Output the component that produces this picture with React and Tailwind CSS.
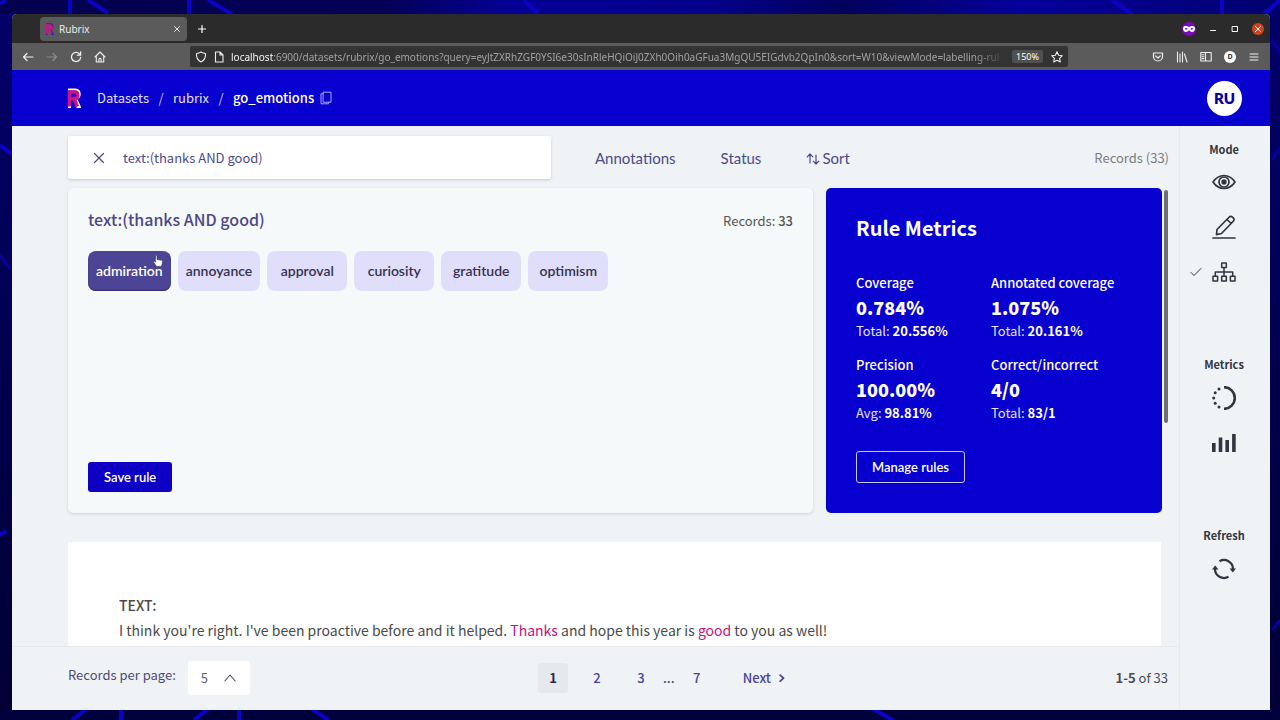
import React from "react";

const SANS = "font-['Noto_Sans_CJK_JP','Noto_Sans',sans-serif]";
const GEO = "font-[Lato,'Liberation_Sans',sans-serif]";

function Wallpaper() {
  return (
    <svg
      className="absolute inset-0 h-full w-full"
      viewBox="0 0 1280 720"
      preserveAspectRatio="none"
      fill="none"
      aria-hidden="true"
    >
      <defs>
        <linearGradient id="sky" x1="0" x2="1">
          <stop offset="0" stopColor="#03004e" />
          <stop offset="0.3" stopColor="#040056" />
          <stop offset="0.4" stopColor="#050095" />
          <stop offset="0.55" stopColor="#04008c" />
          <stop offset="0.66" stopColor="#03005c" />
          <stop offset="0.8" stopColor="#05009c" />
          <stop offset="1" stopColor="#03006e" />
        </linearGradient>
        <linearGradient id="edge" x1="0" x2="0" y1="0" y2="1">
          <stop offset="0" stopColor="#04006a" />
          <stop offset="0.35" stopColor="#030058" />
          <stop offset="0.6" stopColor="#020048" />
          <stop offset="1" stopColor="#020034" />
        </linearGradient>
      </defs>
      <rect width="1280" height="720" fill="url(#edge)" />
      <rect width="1280" height="14" fill="url(#sky)" />
      <rect y="709" width="1280" height="11" fill="#02003c" />
      <g stroke="#0b02c6" strokeWidth="4">
        <path d="M0 4 6 0M70 0v14M88 0l20 13M189 0v14M208 0l24 14M524 0l14 13M1112 0l20 14M1222 0v14M1280 0l-16 14" />
        <path d="M0 145l12 9M0 535l6-4M72 720l14-11M121 709v11M194 720l14-11M239 709v11M312 709l16 11M873 709l20 11" />
      </g>
      <g stroke="#0700a0" strokeWidth="3">
        <path d="M1272 40l8 12M1272 160l8-12M1272 630l8-10M0 255l10 14" />
      </g>
    </svg>
  );
}

function Stroke({ className, box = "0 0 16 16", width = 1.4, children }) {
  return (
    <svg
      className={className}
      viewBox={box}
      fill="none"
      stroke="currentColor"
      strokeWidth={width}
      strokeLinecap="round"
      strokeLinejoin="round"
      aria-hidden="true"
    >
      {children}
    </svg>
  );
}

function RubrixMark({ className, back }) {
  return (
    <svg className={className} viewBox="0 0 14 20" fill="none" aria-hidden="true">
      <path d="M1 1.500h7.500c3 0 4.300 1.800 4.300 4.500 0 2.300-1.300 4-3.500 4.600L13 19h-3.500M1 19h3" stroke={back} strokeWidth="1.800" />
      <path d="M2.500 18.500V4h4.700c2.200 0 3.600 1 3.600 3.200s-1.400 3.300-3.600 3.300H3.500M7 10.500l3.300 8" stroke="#cf1187" strokeWidth="3.600" />
    </svg>
  );
}

function TabStrip() {
  return (
    <div className="flex h-[29px] shrink-0 items-center bg-[#2b2b2b] pl-7 pr-1.5 font-['Noto_Sans','Open_Sans',sans-serif] text-white">
      <div className="flex h-6 w-[147px] items-center rounded-sm bg-[#5b5b5b] pl-[5px] pr-1.5">
        <RubrixMark className="h-3 w-[9px]" back="#3a16b8" />
        <span className="ml-[5px] flex-1 text-[10px] leading-4 text-[#ededed]">Rubrix</span>
        <button aria-label="Close tab" className="text-[#e0e0e0]">
          <Stroke className="size-2" box="0 0 8 8" width={1}>
            <path d="M1.500 1.500l5 5M6.500 1.500l-5 5" />
          </Stroke>
        </button>
      </div>
      <button aria-label="New tab" className="ml-2.5">
        <Stroke className="size-2.5" box="0 0 10 10" width={1.200}>
          <path d="M5 1.500v7M1.500 5h7" />
        </Stroke>
      </button>
      <div className="ml-auto flex items-center">
        <svg className="size-3.5" viewBox="0 0 14 14" aria-hidden="true">
          <circle cx="7" cy="7" r="7" fill="#7a09bf" />
          <path
            d="M1 6.500C1 4.500 2.500 4 4 4c1.500 0 2.200.8 3 .8S8.500 4 10 4c1.500 0 3 .5 3 2.500S11.800 10 10 10C8.500 10 7.800 8.500 7 8.500S5.500 10 4 10C2.200 10 1 8.500 1 6.500Z"
            fill="#fff"
          />
          <path d="M2.800 6.800c.6-1.100 2.100-1.100 2.800.2-.7 1.100-2.200 1.100-2.800-.2ZM11.200 6.800c-.6-1.100-2.100-1.100-2.800.2.7 1.100 2.200 1.100 2.800-.2Z" fill="#7a09bf" />
        </svg>
        <button aria-label="Minimize" className="ml-3">
          <Stroke className="size-2.5" box="0 0 10 10" width={1}>
            <path d="M2.500 6.500h5" />
          </Stroke>
        </button>
        <button aria-label="Maximize" className="ml-3">
          <Stroke className="size-2.5" box="0 0 10 10" width={1}>
            <rect x="2.500" y="2.500" width="5" height="5" />
          </Stroke>
        </button>
        <button aria-label="Close window" className="ml-3 rounded-full bg-[#d0431c] p-px">
          <Stroke className="size-2.5" box="0 0 10 10" width={1}>
            <path d="M2.500 2.500l5 5M7.500 2.500l-5 5" />
          </Stroke>
        </button>
      </div>
    </div>
  );
}

function Toolbar() {
  return (
    <div className="flex h-[27px] shrink-0 items-center bg-[#5b5b5b] px-2.5 font-['Noto_Sans','Open_Sans',sans-serif] text-[#efefef]">
      <div className="flex w-[168px] shrink-0 items-center gap-3">
        <button aria-label="Back">
          <Stroke className="size-3" box="0 0 12 12" width={1.200}>
            <path d="M11 6H1.500M5 2.500 1.500 6 5 9.500" />
          </Stroke>
        </button>
        <button aria-label="Forward" className="text-[#8c8c8c]">
          <Stroke className="size-3" box="0 0 12 12" width={1.200}>
            <path d="M1 6h9.500M7 2.500 10.500 6 7 9.500" />
          </Stroke>
        </button>
        <button aria-label="Reload">
          <Stroke className="size-3" box="0 0 12 12" width={1.300}>
            <path d="M10.600 6.500A4.600 4.600 0 1 1 9.500 2.900M10.600 1v3.200H7.400" />
          </Stroke>
        </button>
        <button aria-label="Home">
          <Stroke className="size-3" box="0 0 12 12" width={1.100}>
            <path d="M1 6l5-5 5 5M2.300 5v6h7.400V5M4.900 11V8.300q0-1 1.100-1t1.100 1V11" />
          </Stroke>
        </button>
      </div>
      <div className="flex h-[21px] w-[878px] min-w-0 items-center rounded-xs bg-[#333333] px-1">
        <Stroke className="ml-px size-3 shrink-0" box="0 0 12 12" width={1.100}>
          <path d="M6 1q2 1.300 4.500 1.500Q11 8.500 6 11 1 8.500 1.500 2.500 4 2.300 6 1Z" />
        </Stroke>
        <Stroke className="ml-1.5 size-3 shrink-0" box="0 0 12 12" width={1.100}>
          <path d="M2.500 1h4.500l3 3v7h-7.500zM7 1v3h3" />
        </Stroke>
        <p className="ml-1.5 min-w-0 flex-1 overflow-hidden whitespace-nowrap text-[10px] leading-4 text-[#a2a2a2] [mask-image:linear-gradient(to_right,black_96%,transparent)]">
          <span className="text-[#f5f5f5]">localhost</span>
          :6900/datasets/rubrix/go_emotions?query=eyJtZXRhZGF0YSI6e30sInRleHQiOiJ0ZXh0Oih0aGFua3MgQU5EIGdvb2QpIn0&amp;sort=W10&amp;viewMode=labelling-rul
        </p>
        <span className="ml-1.5 rounded-xs bg-[#505050] px-1 text-[9px] leading-[13px] text-white">150%</span>
        <button aria-label="Bookmark" className="ml-2 mr-px">
          <Stroke className="size-3" box="0 0 12 12" width={1.100}>
            <path d="M6 .8l1.600 3.400 3.700.5-2.700 2.600.7 3.700L6 9.200 2.700 11l.7-3.700L.7 4.700l3.700-.5z" />
          </Stroke>
        </button>
      </div>
      <div className="ml-auto flex items-center gap-3">
        <button aria-label="Pocket">
          <Stroke className="size-3" box="0 0 12 12" width={1.200}>
            <path d="M1.500 2h9v3.500a4.500 4.500 0 0 1-9 0zM3.800 5 6 7.200 8.200 5" />
          </Stroke>
        </button>
        <button aria-label="Library">
          <Stroke className="size-3" box="0 0 12 12" width={1.100}>
            <path d="M1.500 1v10M4 3v8M6.500 1v10M8.500 3l2.500 8" />
          </Stroke>
        </button>
        <button aria-label="Sidebar">
          <Stroke className="size-3" box="0 0 12 12" width={1.100}>
            <path d="M.8 1.500h10.400v8.500H.8zM5.500 1.500V10M2.300 3.800h1.500M2.300 5.700h1.500M2.300 7.600h1.500" />
          </Stroke>
        </button>
        <button aria-label="Account" className="size-3 rounded-full bg-white text-center text-[7px] font-bold leading-3 text-[#333]">
          D
        </button>
        <button aria-label="Menu">
          <Stroke className="size-3" box="0 0 12 12" width={1.100}>
            <path d="M2 3h8M2 6h8M2 9h8" />
          </Stroke>
        </button>
      </div>
    </div>
  );
}

function Header() {
  return (
    <header className="flex h-14 shrink-0 items-center bg-[#0700cf] pl-[55px] pr-7 text-white">
      <a href="#home" aria-label="Home">
        <RubrixMark className="h-5 w-3.5" back="#ffffff" />
      </a>
      <nav aria-label="Breadcrumb" className="ml-4 flex items-center text-[13px] leading-5">
        <a href="#datasets" className="text-[#e4e2ff]">Datasets</a>
        <span className="w-6 text-center text-[#c9c6ff]">/</span>
        <a href="#rubrix" className="text-[#e4e2ff]">rubrix</a>
        <span className="w-6 text-center text-[#c9c6ff]">/</span>
        <a href="#go_emotions" className="font-medium">go_emotions</a>
      </nav>
      <button aria-label="Copy name" className="ml-1.5 text-[#a9a5f5]">
        <Stroke className="h-3.5 w-3" box="0 0 12 14" width={1}>
          <path d="M3.500 1.200h7.500v10H3.500zM3.500 2.800H1v10h7.500v-1.600" />
        </Stroke>
      </button>
      <button className={`${GEO} ml-auto size-[35px] rounded-full bg-white text-[15px] font-extrabold text-[#0700a0]`}>RU</button>
    </header>
  );
}

function Filters() {
  return (
    <div className="flex h-[43px] shrink-0 items-center">
      <div className="flex h-full w-[483px] items-center rounded-xs bg-white pl-6 text-[#4c4a8c] shadow-[0_1px_3px_rgba(0,0,0,0.16)]">
        <button aria-label="Clear search">
          <Stroke className="size-3.5" box="0 0 14 14" width={1.200}>
            <path d="M2.500 2.500l9 9M11.500 2.500l-9 9" />
          </Stroke>
        </button>
        <input
          aria-label="Search records"
          defaultValue="text:(thanks AND good)"
          className="ml-[17px] min-w-0 flex-1 bg-transparent text-[13px] leading-5 outline-none"
        />
      </div>
      <div className={`${GEO} ml-11 flex items-center gap-[45px] text-[15px] leading-5 text-[#4c4a8c]`}>
        <button>Annotations</button>
        <button>Status</button>
        <button className="flex items-center gap-0.5">
          <Stroke className="size-3.5" box="0 0 14 14" width={1.200}>
            <path d="M4 12V3M1.200 5.800 4 3l2.800 2.800M10 4v9M7.200 10.200l2.800 2.800 2.800-2.800" />
          </Stroke>
          Sort
        </button>
      </div>
      <p className="ml-auto text-[13px] leading-5 text-[#7c7c80]">Records (33)</p>
    </div>
  );
}

const LABELS = ["admiration", "annoyance", "approval", "curiosity", "gratitude", "optimism"];

function Hand() {
  return (
    <svg className="absolute right-2 top-1 h-3 w-2.5" viewBox="0 0 10 12" aria-hidden="true">
      <path
        d="M3 .6c.7 0 1 .4 1 1V4.500l4.500.8c.8.2 1.100.6 1 1.400L9 9.500 8.300 11.500H3.600L.8 7.500c-.5-.8.3-1.500 1-.9L2.500 7.200V1.600c0-.6.1-1 .5-1Z"
        fill="#fff"
        stroke="#222"
        strokeWidth="0.500"
      />
    </svg>
  );
}

function RulePanel() {
  return (
    <section className="flex min-w-0 flex-1 flex-col rounded-[5px] bg-[#f5f9fa] px-5 pb-[21px] pt-[19px] shadow-[0_1px_3px_rgba(0,0,0,0.14)]">
      <div className="flex items-end justify-between">
        <h2 className="text-[16px] font-medium leading-6 text-[#4c4786]">text:(thanks AND good)</h2>
        <p className="text-[13px] leading-5 text-[#555]">
          Records: <strong className="font-medium">33</strong>
        </p>
      </div>
      <div className={`${GEO} mt-5 flex flex-wrap gap-[7px] text-[14px] font-semibold leading-5`}>
        {LABELS.map((label, i) => (
          <button
            key={label}
            className={
              i === 0
                ? "relative h-10 min-w-20 rounded-lg bg-[#4c4596] px-2 text-white shadow-[inset_0_-1px_1px_#332c70]"
                : "h-10 min-w-20 rounded-lg bg-[#e0defb] px-2 text-[#343250]"
            }
          >
            {label}
            {i === 0 && <Hand />}
          </button>
        ))}
      </div>
      <button className={`${GEO} mt-auto h-[30px] self-start rounded-[3px] bg-[#0d00c4] px-4 text-[13px] font-semibold leading-5 text-white`}>
        Save rule
      </button>
    </section>
  );
}

const METRICS = [
  ["Coverage", "0.784%", "Total:", "20.556%"],
  ["Annotated coverage", "1.075%", "Total:", "20.161%"],
  ["Precision", "100.00%", "Avg:", "98.81%"],
  ["Correct/incorrect", "4/0", "Total:", "83/1"],
];

function RuleMetrics() {
  return (
    <section className="flex w-[336px] shrink-0 flex-col items-start rounded-[5px] bg-[#0700cf] px-[30px] pb-[30px] pt-[26px] text-white">
      <h2 className="text-[20px] font-bold leading-7">Rule Metrics</h2>
      <dl className="mt-[29px] grid grid-cols-[135px_auto] gap-y-[11px]">
        {METRICS.map(([name, value, note, total]) => (
          <div key={name}>
            <dt className="text-[13px] font-medium leading-6">{name}</dt>
            <dd className="text-[18px] font-black leading-6">{value}</dd>
            <dd className="text-[13px] leading-[23px] text-[#e4e2ff]">
              {note} <strong className="font-bold text-white">{total}</strong>
            </dd>
          </div>
        ))}
      </dl>
      <button className={`${GEO} mt-auto h-8 rounded-[3px] border border-[#c9c6ff] px-[15px] text-[13px] font-semibold leading-5`}>
        Manage rules
      </button>
    </section>
  );
}

function Record() {
  return (
    <article className="mr-2 mt-[29px] min-h-40 flex-1 bg-white px-[51px] pt-[50px] text-[#4a4a4a]">
      <h3 className="text-[14px] font-medium leading-[26px]">TEXT:</h3>
      <p className="text-[14px] leading-[25px]">
        I think you're right. I've been proactive before and it helped. <mark className="bg-transparent text-[#c8107e]">Thanks</mark> and hope
        this year is <mark className="bg-transparent text-[#c8107e]">good</mark> to you as well!
      </p>
    </article>
  );
}

function Footer() {
  const page = "flex h-[30px] w-[30px] items-center justify-center rounded-[3px]";
  return (
    <footer className="grid h-16 shrink-0 grid-cols-[470px_auto_1fr] items-center border-t border-[#e6e8ec] pb-0.5 pl-14 pr-[11px] text-[13px] leading-5 text-[#4c4a78]">
      <div className="flex items-center">
        <label htmlFor="per-page" className="mb-1.5">Records per page:</label>
        <div className="relative ml-3">
          <select id="per-page" defaultValue="5" className="h-[34px] w-[62px] appearance-none rounded-[3px] bg-white pl-[13px] text-[#5f5d8f]">
            <option>5</option>
            <option>10</option>
            <option>20</option>
          </select>
          <Stroke className="pointer-events-none absolute right-3.5 top-[11px] size-3" box="0 0 12 12" width={1.100}>
            <path d="M.8 9 6 3l5.200 6" />
          </Stroke>
        </div>
      </div>
      <nav aria-label="Pages" className="flex items-center font-medium text-[#4a459a]">
        <button aria-current="page" className={`${page} bg-[#e6e9ec] font-bold text-[#2c2758]`}>1</button>
        <button className={`${page} ml-3.5`}>2</button>
        <button className={`${page} ml-3.5`}>3</button>
        <span className="mx-[7px] text-[#4a4a6a]">...</span>
        <button className={page}>7</button>
        <button className="ml-[31px] flex items-center gap-2">
          Next
          <Stroke className="h-2.5 w-1.5" box="0 0 6 10" width={1.800}>
            <path d="M1.200 2.200 4.500 5.200 1.200 8.200" />
          </Stroke>
        </button>
      </nav>
      <p className="text-right text-[#4a4a5a]">
        <strong className="font-bold">1-5</strong> of 33
      </p>
    </footer>
  );
}

function Sidebar() {
  const heading = "text-[11px] font-bold leading-4";
  return (
    <aside className="flex w-[91px] shrink-0 flex-col items-center border-l border-[#e6e9ed] pr-0.5 pt-[15px] text-[#33343f]">
      <h4 className={heading}>Mode</h4>
      <button aria-label="Explore" className="mt-[13px]">
        <Stroke className="size-6" box="0 0 24 24" width={1.700}>
          <path d="M1 12Q5.500 5.500 12 5.500T23 12q-4.500 6.500-11 6.500T1 12Z" />
          <circle cx="12" cy="12" r="5" />
          <circle cx="12" cy="12" r="1.800" fill="currentColor" />
        </Stroke>
      </button>
      <button aria-label="Annotate" className="mt-[21px]">
        <Stroke className="size-6" box="0 0 24 24" width={1.700}>
          <path d="M1 23h22" />
          <path d="M5 14.500 17.300 2q1.500-1.200 3.500.4t.7 3.600L9.500 18.500 4.500 19.600zM15 4.500l4.200 4" />
        </Stroke>
      </button>
      <div className="relative mt-[21px] flex">
        <Stroke className="absolute -left-[22px] top-[6px] size-3" box="0 0 12 12" width={1}>
          <path d="M1 6.500 4 9.500 11 2.500" />
        </Stroke>
        <button aria-label="Define rules">
          <Stroke className="size-6" box="0 0 24 24" width={1.500}>
            <path d="M9.700 3h4.600v4.600H9.700zM1 16.300h4.600v4.600H1zM9.700 16.300h4.600v4.600H9.700zM18.400 16.300H23v4.600h-4.600zM12 7.600v8.700M3.300 16.300V12h17.400v4.300" />
          </Stroke>
        </button>
      </div>
      <h4 className={`${heading} mt-[72px]`}>Metrics</h4>
      <button aria-label="Progress" className="mt-3.5">
        <svg className="size-6" viewBox="0 0 24 24" fill="currentColor" aria-hidden="true">
          <path d="M12 1.200a10.800 10.800 0 0 1 0 21.600" fill="none" stroke="currentColor" strokeWidth="2.600" />
          <circle cx="7" cy="3" r="1.500" />
          <circle cx="3.200" cy="6.800" r="1.500" />
          <circle cx="1.700" cy="12" r="1.500" />
          <circle cx="3.200" cy="17.200" r="1.500" />
          <circle cx="7" cy="21" r="1.500" />
        </svg>
      </button>
      <button aria-label="Stats" className="mt-[21px]">
        <svg className="size-6" viewBox="0 0 24 24" fill="currentColor" aria-hidden="true">
          <path d="M0 12h3.600v9H0zM6.700 6.500h3.600V21H6.700zM13.400 9H17v12h-3.600zM20.100 3h3.600v18h-3.600z" />
        </svg>
      </button>
      <h4 className={`${heading} mt-[72px]`}>Refresh</h4>
      <button aria-label="Refresh" className="mt-3.5">
        <svg className="size-6" viewBox="0 0 24 24" fill="none" stroke="currentColor" strokeWidth="2.200" aria-hidden="true">
          <path d="M7.500 4.200A9 9 0 0 1 21 12v1M16.500 19.800A9 9 0 0 1 3 12v-1" />
          <path d="M17.500 11.500h6.500l-3.200 4zM0 12.500h6.500l-3.300-4z" fill="currentColor" stroke="none" />
        </svg>
      </button>
    </aside>
  );
}

export default function App() {
  return (
    <div className={`${SANS} relative flex h-screen bg-[#03004a] pb-2.5 pl-3 pr-2.5 pt-3.5`}>
      <Wallpaper />
      <div className="relative flex min-w-0 flex-1 flex-col overflow-hidden rounded-t-[5px] bg-[#eff3f6]">
        <TabStrip />
        <Toolbar />
        <Header />
        <div className="flex min-h-0 flex-1">
          <div className="flex min-w-0 flex-1 flex-col">
            <main className="flex min-h-0 flex-1 flex-col overflow-hidden pl-14 pr-2.5 pt-2.5">
              <Filters />
              <div className="mt-[9px] flex shrink-0">
                <div className="flex min-h-[325px] min-w-0 flex-1 gap-[13px]">
                  <RulePanel />
                  <RuleMetrics />
                </div>
                <div className="ml-0.5 mr-px mt-0.5 h-[233px] w-1 shrink-0 rounded-full bg-[#6d6f70]" />
              </div>
              <Record />
            </main>
            <Footer />
          </div>
          <Sidebar />
        </div>
      </div>
    </div>
  );
}
